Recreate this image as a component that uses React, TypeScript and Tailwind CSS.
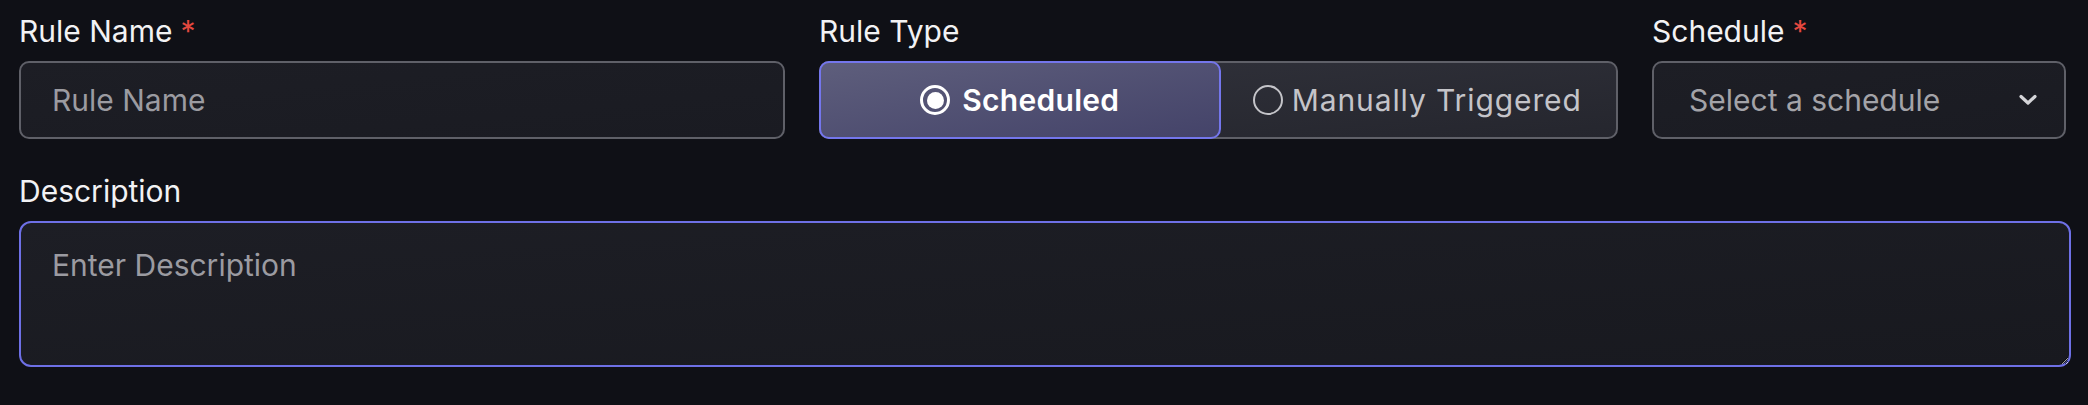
import { useState } from 'react';

function Label({ text, required }: { text: string; required?: boolean }) {
	return (
		<label className="block text-[30px] leading-[42px] text-[#f2f2f4] mb-[9px]">
			{text}
			{required && <span className="text-[#e5483f] ml-[8px]">*</span>}
		</label>
	);
}

function RadioDot({ checked }: { checked: boolean }) {
	return (
		<span
			className={`flex items-center justify-center w-[30px] h-[30px] rounded-full ${
				checked ? 'border-[3px] border-white' : 'border-[2.5px] border-[#c4c4c9]'
			}`}
		>
			{checked && <span className="w-[17px] h-[17px] rounded-full bg-white" />}
		</span>
	);
}

export default function App() {
	const [ruleType, setRuleType] = useState<'scheduled' | 'manual'>('scheduled');

	return (
		<div
			className="w-full h-[405px] bg-[#0f1016] pl-[19px] pr-[17px] pt-[10px]"
			style={{ fontFamily: 'Inter, "Noto Sans", sans-serif' }}
		>
			{/* Top row */}
			<div className="grid grid-cols-[766px_799px_414px] gap-x-[34px]">
				<div>
					<Label text="Rule Name" required />
					<input
						placeholder="Rule Name"
						className="w-full h-[78px] rounded-[10px] border-2 border-[#5f6068] bg-gradient-to-br from-[#1d1e25] to-[#1a1b22] pl-[31px] text-[30px] text-white placeholder:text-[#9b9ba1] outline-none"
					/>
				</div>

				<div>
					<Label text="Rule Type" />
					<div className="flex h-[78px] rounded-[10px] border-2 border-[#5f6068] bg-gradient-to-br from-[#31323b] to-[#25262e]">
						<button
							onClick={() => setRuleType('scheduled')}
							className={`flex-1 -m-[2px] flex items-center justify-center gap-[12px] rounded-[10px] border-2 text-[30px] ${
								ruleType === 'scheduled'
									? 'border-[#7476ec] bg-gradient-to-br from-[#5e5e7c] to-[#444369] text-white font-semibold tracking-[0.3px]'
									: 'border-transparent text-[#c4c4c9] tracking-[0.9px]'
							}`}
						>
							<RadioDot checked={ruleType === 'scheduled'} />
							Scheduled
						</button>
						<button
							onClick={() => setRuleType('manual')}
							className={`flex-1 -m-[2px] flex items-center justify-center gap-[9px] rounded-[10px] border-2 text-[30px] ${
								ruleType === 'manual'
									? 'border-[#7476ec] bg-gradient-to-br from-[#5e5e7c] to-[#444369] text-white font-semibold tracking-[0.3px]'
									: 'border-transparent text-[#c4c4c9] tracking-[0.9px]'
							}`}
						>
							<RadioDot checked={ruleType === 'manual'} />
							Manually Triggered
						</button>
					</div>
				</div>

				<div>
					<Label text="Schedule" required />
					<button className="w-full h-[78px] flex items-center justify-between rounded-[10px] border-2 border-[#5f6068] bg-gradient-to-br from-[#1d1e25] to-[#1a1b22] pl-[35px] pr-[26px] text-[30px] text-[#a3a3a8]">
						<span>Select a schedule</span>
						<svg width="20" height="12" viewBox="0 0 20 12" fill="none">
							<path
								d="M3 2.5 L10 9 L17 2.5"
								stroke="#d4d4d8"
								strokeWidth="3.2"
								strokeLinecap="round"
								strokeLinejoin="round"
							/>
						</svg>
					</button>
				</div>
			</div>

			{/* Description */}
			<div className="mt-[31px]">
				<Label text="Description" />
				<textarea
					placeholder="Enter Description"
					className="block w-full h-[146px] rounded-[12px] border-2 border-[#6e70e6] bg-gradient-to-br from-[#1d1e25] to-[#18191f] px-[31px] pt-[21px] text-[30px] leading-[42px] text-white placeholder:text-[#9b9ba1] outline-none resize-y"
				/>
			</div>
		</div>
	);
}
